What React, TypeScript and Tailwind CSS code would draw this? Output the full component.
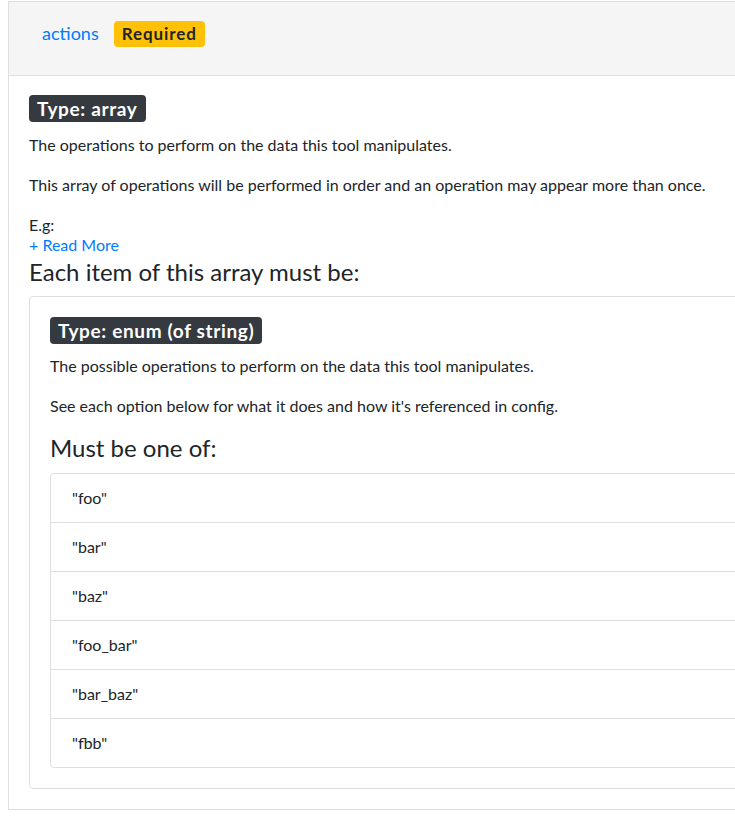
const font = { fontFamily: "Lato, 'Open Sans', sans-serif" };

const options = ['"foo"', '"bar"', '"baz"', '"foo_bar"', '"bar_baz"', '"fbb"'];

function TypeBadge({ label }: { label: string }) {
  return (
    <span className="inline-block self-start rounded-[4px] bg-[#343a40] px-[8px] h-[27px] leading-[27px] text-[19px] tracking-[0.65px] font-bold text-white">
      {label}
    </span>
  );
}

export default function App() {
  return (
    <div className="w-[735px] h-[816px] overflow-hidden bg-white text-[#212529] text-[16px]" style={font}>
      <div className="ml-[8px] mt-[1px] w-[900px] border border-[#dfdfdf] bg-white">
        <div className="flex h-[74px] items-center gap-[15px] border-b border-[#dfdfdf] bg-[#f5f5f5] pl-[33px] pb-[10px]">
          <span className="text-[18px] text-[#007bff]">actions</span>
          <span className="rounded-[4px] bg-[#ffc107] px-[8px] h-[26px] leading-[26px] text-[17px] tracking-[0.9px] font-bold text-[#212529]">
            Required
          </span>
        </div>

        <div className="flex flex-col px-[20px] pt-[19px] pb-[20px]">
          <TypeBadge label="Type: array" />
          <p className="mt-[11px] mb-[16px] leading-[24px]">The operations to perform on the data this tool manipulates.</p>
          <p className="mb-[16px] leading-[24px]">
            This array of operations will be performed in order and an operation may appear more than once.
          </p>
          <p className="leading-[24px]">E.g:</p>
          <a className="leading-[16px] text-[#007bff]">+ Read More</a>
          <h4 className="mt-[4px] mb-[10px] text-[24px] leading-[29px]">Each item of this array must be:</h4>

          <div className="flex flex-col rounded-[4px] border border-[#dfdfdf] p-[20px]">
            <TypeBadge label="Type: enum (of string)" />
            <p className="mt-[10px] mb-[16px] leading-[24px]">The possible operations to perform on the data this tool manipulates.</p>
            <p className="mb-[15px] leading-[24px]">See each option below for what it does and how it's referenced in config.</p>
            <h4 className="mb-[11px] text-[24px] leading-[29px]">Must be one of:</h4>
            <ul className="rounded-[4px] border border-[#dfdfdf]">
              {options.map((o, i) => (
                <li
                  key={o}
                  className={`px-[21px] py-[12px] leading-[24px] ${i > 0 ? "border-t border-[#dfdfdf]" : ""}`}
                >
                  {o}
                </li>
              ))}
            </ul>
          </div>
        </div>
      </div>
    </div>
  );
}
